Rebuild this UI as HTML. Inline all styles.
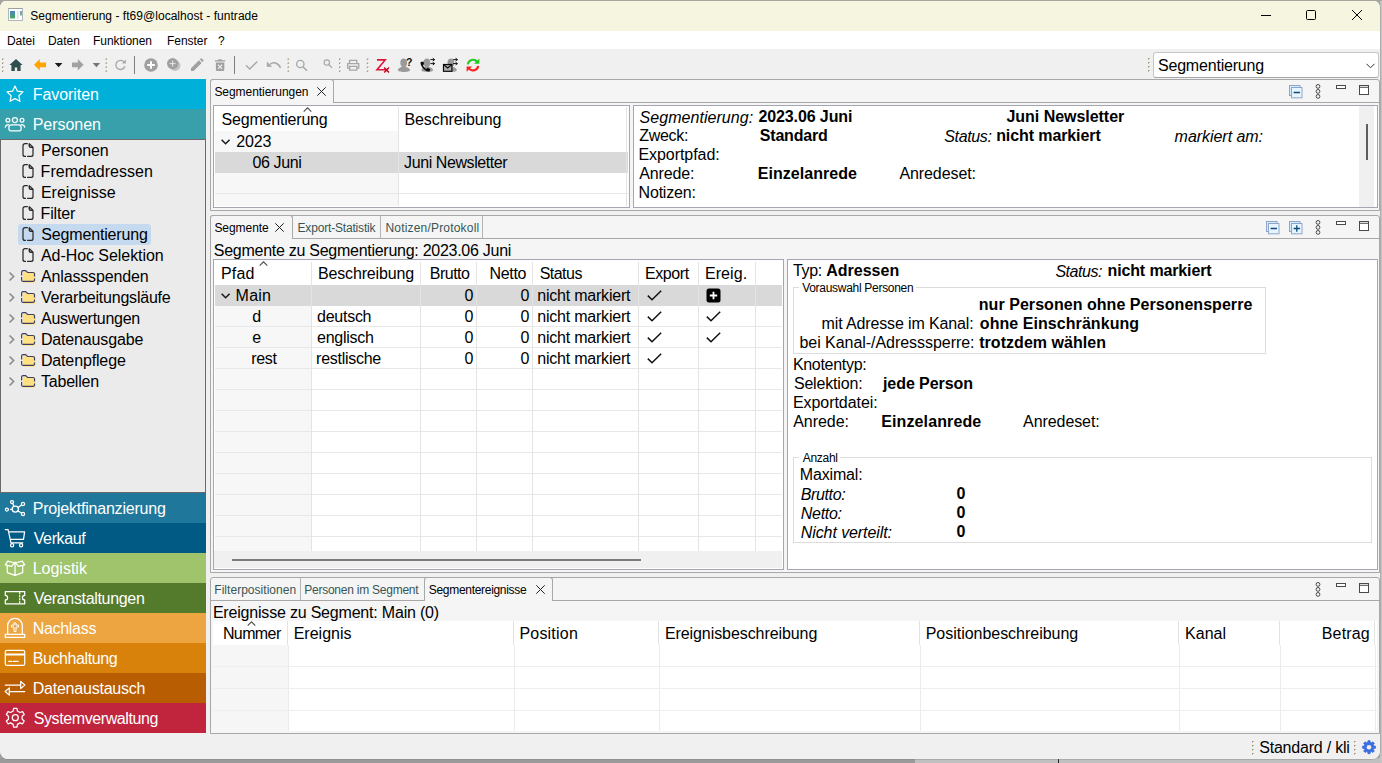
<!DOCTYPE html>
<html lang="de">
<head>
<meta charset="utf-8">
<title>Segmentierung - ft69@localhost - funtrade</title>
<style>
*{box-sizing:border-box;margin:0;padding:0}
html,body{width:1382px;height:763px;overflow:hidden;background:#a4a4a4}
#win{position:absolute;left:0;top:0;width:1380px;height:759px;border-radius:8px;overflow:hidden;background:#f0f0f0;box-shadow:0 0 0 1px rgba(120,120,120,.3)}
body{position:relative;font-family:"Liberation Sans",sans-serif;font-size:16px;color:#000}
.abs{position:absolute}
svg{position:absolute;overflow:visible}
.c{position:absolute;white-space:nowrap;font-size:16px;line-height:19px;height:19px;letter-spacing:-0.27px}
.u{font-size:12px;line-height:16px;height:16px;letter-spacing:-0.08px}
.g{color:#385555}
.w{color:#fff}
.b{font-weight:bold;letter-spacing:-0.1px}
.i{font-style:italic}
.bar{position:absolute;left:0;width:206px;height:30px}
.hl{position:absolute;height:1px;background:#e8e8e8}
.vl{position:absolute;width:1px;background:#e4e4e4}
.pn{position:absolute;background:#fff;border:1px solid #a4a7b2}
.op{position:absolute;background:#f5f5f5;border:1px solid #a8a8a8;border-radius:3px 3px 0 0}
.dots{position:absolute;width:1px;height:15px;background:repeating-linear-gradient(to bottom,#9c8f6c 0,#9c8f6c 1px,transparent 1px,transparent 3px)}
</style>
</head>
<body>

<div class="abs" style="left:0;top:758px;width:1382px;height:5px;background:#9a9a9a"></div><div class="abs" style="left:915px;top:758px;width:467px;height:5px;background:#c0c0c0"></div><div class="abs" style="left:1058px;top:759px;width:1px;height:4px;background:#222"></div><div class="abs" style="left:1380px;top:0;width:2px;height:763px;background:#c4c4c4"></div>
<div id="win">
<div class="abs" style="left:0px;top:0px;width:1382px;height:31px;background:#f5f5e0"></div>
<svg style="left:8px;top:8px" width="15" height="13" viewBox="0 0 15 13"><defs><linearGradient id="ag" x1="0" y1="0" x2="0" y2="1"><stop offset="0" stop-color="#4a84c6"/><stop offset="1" stop-color="#4cac58"/></linearGradient></defs><rect x="0.500" y="0.500" width="14" height="12" fill="#fff" stroke="#b2b6c0"/><path d="M0.500 0.500h14" stroke="#9aa0aa"/><rect x="2" y="3" width="5" height="7.500" fill="url(#ag)"/><rect x="9" y="3" width="1.700" height="8" fill="#e6e6e6"/><rect x="12" y="3" width="2" height="4.500" fill="url(#ag)" opacity="0.800"/></svg>
<div class="c u" style="left:30.20px;top:8px;letter-spacing:0.037px;">Segmentierung - ft69@localhost - funtrade</div>
<svg style="left:1260px;top:9px" width="104" height="12" viewBox="0 0 104 12" fill="none" stroke="#000" stroke-width="1"><path d="M1 6.500h10"/><rect x="46.500" y="1.500" width="9" height="9" rx="1"/><path d="M92 1l10 10M102 1l-10 10"/></svg>
<div class="abs" style="left:0px;top:31px;width:1382px;height:18px;background:#fff"></div>
<div class="c u" style="left:7.00px;top:33px;letter-spacing:-0.050px;">Datei</div>
<div class="c u" style="left:48.00px;top:33px;letter-spacing:-0.050px;">Daten</div>
<div class="c u" style="left:93.00px;top:33px;letter-spacing:-0.050px;">Funktionen</div>
<div class="c u" style="left:167.00px;top:33px;letter-spacing:-0.050px;">Fenster</div>
<div class="c u" style="left:218.00px;top:33px;letter-spacing:-0.050px;">?</div>
<div class="abs" style="left:0px;top:49px;width:1382px;height:30px;background:#f0f0f0"></div>
<svg style="left:0;top:49px" width="500" height="30" viewBox="0 49 500 30">
<g fill="#a39676"><rect x="2" y="58.5" width="1.6" height="1.6"/><rect x="2" y="62.5" width="1.6" height="1.6"/><rect x="2" y="66.5" width="1.6" height="1.6"/><rect x="2" y="70.5" width="1.6" height="1.6"/><rect x="105.6" y="58.5" width="1.6" height="1.6"/><rect x="105.6" y="62.5" width="1.6" height="1.6"/><rect x="105.6" y="66.5" width="1.6" height="1.6"/><rect x="105.6" y="70.5" width="1.6" height="1.6"/></g>
<g fill="#fff"><rect x="3" y="59.5" width="1.2" height="1.2"/><rect x="3" y="63.5" width="1.2" height="1.2"/><rect x="3" y="67.5" width="1.2" height="1.2"/><rect x="3" y="71.5" width="1.2" height="1.2"/><rect x="106.6" y="59.5" width="1.2" height="1.2"/><rect x="106.6" y="63.5" width="1.2" height="1.2"/><rect x="106.6" y="67.5" width="1.2" height="1.2"/><rect x="106.6" y="71.5" width="1.2" height="1.2"/></g>
<path d="M16 59L9.4 65h2v6h3.4v-3.6h2.4V71h3.4v-6h2z" fill="#2f4f4f"/>
<path d="M34 64.8l5.8-5.8v3.4h6.3v4.8h-6.3v3.4z" fill="#ffa500"/>
<path d="M54.8 63h7.6l-3.8 4.2z" fill="#1a1a1a"/>
<path d="M83.6 64.8l-5.8-5.8v3.4h-5.8v4.8h5.8v3.4z" fill="#a2a2a2"/>
<path d="M92.7 63h7.4l-3.7 4.2z" fill="#757575"/>
<path d="M124.3 62.3A4.6 4.6 0 1 0 124.9 66.2" fill="none" stroke="#a6a6a6" stroke-width="1.3"/><path d="M125.8 59.6v3.8h-3.8z" fill="#a6a6a6"/>
<rect x="134" y="56" width="1" height="18" fill="#7e7e7e"/>
<circle cx="151" cy="65" r="6.8" fill="#a0a0a0"/><path d="M151 61.2v7.6M147.2 65h7.6" stroke="#fff" stroke-width="2"/>
<circle cx="175" cy="65.5" r="5.4" fill="#c2c2c2"/><circle cx="172.6" cy="63.6" r="5.6" fill="#a0a0a0"/><path d="M172.6 60.6v6M169.6 63.6h6" stroke="#e8e8e8" stroke-width="1"/>
<path d="M191 70.9v-2.6l8-8 2.6 2.6-8 8zM199.8 59.5l1-1a.7.7 0 0 1 1 0l1.6 1.6a.7.7 0 0 1 0 1l-1 1z" fill="#a0a0a0"/>
<path d="M215 60.2h3l.7-.9h2.8l.7.9h3v1.3H215zM215.9 62.5h8.4v7.2a1.2 1.2 0 0 1-1.2 1.2h-6a1.2 1.2 0 0 1-1.2-1.2z" fill="#a0a0a0"/><path d="M218 64.6l4.2 4.2M222.2 64.6l-4.2 4.2" stroke="#f0f0f0" stroke-width="1.2"/>
<rect x="234" y="56" width="1" height="18" fill="#7e7e7e"/>
<path d="M246 65.3l3.7 3.7 7.6-7.6" fill="none" stroke="#a6a6a6" stroke-width="1.4"/>
<path d="M270.2 64.2c3-2.5 7.6-2 10.4 3.6" fill="none" stroke="#a6a6a6" stroke-width="1.5"/><path d="M266.8 61.4v5.4h5.4z" fill="#a6a6a6"/>
<g fill="#a39676"><rect x="287.6" y="58.5" width="1.6" height="1.6"/><rect x="287.6" y="62.5" width="1.6" height="1.6"/><rect x="287.6" y="66.5" width="1.6" height="1.6"/><rect x="287.6" y="70.5" width="1.6" height="1.6"/><rect x="339" y="58.5" width="1.6" height="1.6"/><rect x="339" y="62.5" width="1.6" height="1.6"/><rect x="339" y="66.5" width="1.6" height="1.6"/><rect x="339" y="70.5" width="1.6" height="1.6"/><rect x="366.8" y="58.5" width="1.6" height="1.6"/><rect x="366.8" y="62.5" width="1.6" height="1.6"/><rect x="366.8" y="66.5" width="1.6" height="1.6"/><rect x="366.8" y="70.5" width="1.6" height="1.6"/></g>
<g fill="#fff"><rect x="288.6" y="59.5" width="1.2" height="1.2"/><rect x="288.6" y="63.5" width="1.2" height="1.2"/><rect x="288.6" y="67.5" width="1.2" height="1.2"/><rect x="288.6" y="71.5" width="1.2" height="1.2"/><rect x="340" y="59.5" width="1.2" height="1.2"/><rect x="340" y="63.5" width="1.2" height="1.2"/><rect x="340" y="67.5" width="1.2" height="1.2"/><rect x="340" y="71.5" width="1.2" height="1.2"/><rect x="367.8" y="59.5" width="1.2" height="1.2"/><rect x="367.8" y="63.5" width="1.2" height="1.2"/><rect x="367.8" y="67.5" width="1.2" height="1.2"/><rect x="367.8" y="71.5" width="1.2" height="1.2"/></g>
<circle cx="300.3" cy="64" r="3.7" fill="none" stroke="#a6a6a6" stroke-width="1.3"/><path d="M303 66.8l4 4" stroke="#a6a6a6" stroke-width="1.5"/>
<circle cx="326.8" cy="62.6" r="2.7" fill="none" stroke="#a6a6a6" stroke-width="1.1"/><path d="M328.8 64.6l3.2 3.2" stroke="#a6a6a6" stroke-width="1.3"/>
<path d="M349.6 63.4v-3h7.2v3M349.6 68.2h-1.9v-4.6h11v4.6h-1.9M349.6 66.4h7.2v3.8h-7.2z" fill="none" stroke="#a6a6a6" stroke-width="1.3"/>
<path d="M377 59.9h8.2l-8.2 9.8h8.6" fill="none" stroke="#dc143c" stroke-width="1.6"/><path d="M384.2 67.4l4.8 5M389 67.4l-4.8 5" stroke="#c4001c" stroke-width="1.4"/>
<path d="M398 70.2c0-2.2 2.4-2.6 3.9-3.4-1.3-1.4-1.6-2.8-1.6-4.6 0-2.2 1.4-3.8 3.4-3.8s3.4 1.600 3.400 3.800c0 1.800-.3 3.200-1.600 4.600 1.500.8 4.500 1.200 4.500 3.400 0 1.200-2.800 1.700-6 1.700s-6-.5-6-1.700z" fill="#9a9a9a"/>
<text x="406" y="66" font-family="Liberation Sans,sans-serif" font-weight="bold" font-size="10.500" fill="#111">?</text>
<path d="M421.4 70.2c0-2.200 2.200-2.600 3.700-3.400-1.300-1.400-1.600-2.800-1.600-4.600 0-2.200 1.400-3.800 3.400-3.800s3.400 1.600 3.400 3.800c0 1.800-.3 3.200-1.600 4.600 1.500.8 4.300 1.200 4.300 3.400 0 1.200-2.700 1.700-5.800 1.700s-5.800-.5-5.800-1.700z" fill="#9a9a9a"/>
<path d="M420.600 62c-.3 1.600.5 4.200 2.600 6.600 2.200 2.400 4.600 3.200 6.400 2.800l.5-2.500-2.500-1.100-1.200 1.200c-1.300-.6-3-2.400-3.500-3.800l1.300-1.100-.9-2.500z" fill="#0a0a0a"/>
<path d="M430.400 59.600h4.200M432.800 58.200l1.800 1.400-1.800 1.400M430.400 63.600h4.200M432.800 62.200l1.800 1.400-1.800 1.400" fill="none" stroke="#111" stroke-width="1"/>
<path d="M445.400 70.200c0-2.200 2.200-2.600 3.700-3.400-1.300-1.400-1.600-2.800-1.600-4.600 0-2.200 1.400-3.800 3.400-3.800s3.400 1.600 3.400 3.800c0 1.800-.3 3.200-1.600 4.600 1.500.8 4.100 1.200 4.100 3.400 0 1.200-2.600 1.700-5.700 1.700s-5.700-.5-5.700-1.700z" fill="#9a9a9a"/>
<rect x="443.500" y="64.500" width="8.400" height="6.800" fill="#b0b0b0" stroke="#0a0a0a" stroke-width="1.200"/><path d="M443.800 64.800l3.900 3.200 3.900-3.200" fill="none" stroke="#0a0a0a" stroke-width="1.100"/>
<path d="M453.200 59.600h4.200M455.600 58.200l1.800 1.400-1.800 1.400M453.200 63.600h4.200M455.600 62.200l1.800 1.400-1.800 1.400" fill="none" stroke="#111" stroke-width="1"/>
<path d="M467.800 64.400a5.300 5.300 0 0 1 9.400-2.600" fill="none" stroke="#26c926" stroke-width="2.200"/><path d="M479.400 58.400v5.400h-5.400z" fill="#26c926"/>
<path d="M478.200 65.800a5.300 5.300 0 0 1-9.400 2.600" fill="none" stroke="#ff1f1f" stroke-width="2.200"/><path d="M466.600 71.800v-5.400h5.400z" fill="#ff1f1f"/>
</svg>
<div class="abs" style="left:1153px;top:52px;width:226px;height:26px;background:#fff;border:1px solid #c6c6c6;border-bottom-color:#a6a6a6;border-radius:3px"></div>
<div class="c" style="left:1158.00px;top:56px;letter-spacing:-0.270px;letter-spacing:-0.2px">Segmentierung</div>
<svg style="left:1366px;top:63px" width="9" height="6" viewBox="0 0 9 6" fill="none" stroke="#333" stroke-width="1"><path d="M0.5 0.8l4 4 4-4"/></svg>
<svg style="left:1148px;top:58.3px" width="3" height="15" viewBox="0 0 3 15"><rect x="0" y="0" width="1.700" height="1.700" fill="#a39a82"/><rect x="1" y="1" width="1.200" height="1.200" fill="#fff"/><rect x="0" y="4" width="1.700" height="1.700" fill="#a39a82"/><rect x="1" y="5" width="1.200" height="1.200" fill="#fff"/><rect x="0" y="8" width="1.700" height="1.700" fill="#a39a82"/><rect x="1" y="9" width="1.200" height="1.200" fill="#fff"/><rect x="0" y="12" width="1.700" height="1.700" fill="#a39a82"/><rect x="1" y="13" width="1.200" height="1.200" fill="#fff"/></svg>
<div class="abs" style="left:0px;top:79px;width:206px;height:30px;background:#00b0d8"></div>
<div class="c w" style="left:32.70px;top:85px;letter-spacing:-0.050px;">Favoriten</div>
<div class="abs" style="left:0px;top:109px;width:206px;height:30px;background:#37a0ab"></div>
<div class="c w" style="left:32.70px;top:115px;letter-spacing:-0.042px;">Personen</div>
<div class="abs" style="left:0px;top:493px;width:206px;height:30px;background:#1f789c"></div>
<div class="c w" style="left:32.70px;top:499px;letter-spacing:-0.215px;">Projektfinanzierung</div>
<div class="abs" style="left:0px;top:523px;width:206px;height:30px;background:#005a84"></div>
<div class="c w" style="left:33.70px;top:529px;letter-spacing:-0.369px;">Verkauf</div>
<div class="abs" style="left:0px;top:553px;width:206px;height:30px;background:#a0c46c"></div>
<div class="c w" style="left:32.70px;top:559px;letter-spacing:-0.007px;">Logistik</div>
<div class="abs" style="left:0px;top:583px;width:206px;height:30px;background:#547a2b"></div>
<div class="c w" style="left:33.70px;top:589px;letter-spacing:-0.325px;">Veranstaltungen</div>
<div class="abs" style="left:0px;top:613px;width:206px;height:30px;background:#eca540"></div>
<div class="c w" style="left:32.70px;top:619px;letter-spacing:-0.301px;">Nachlass</div>
<div class="abs" style="left:0px;top:643px;width:206px;height:30px;background:#d9820b"></div>
<div class="c w" style="left:32.70px;top:649px;letter-spacing:-0.396px;">Buchhaltung</div>
<div class="abs" style="left:0px;top:673px;width:206px;height:30px;background:#b95d02"></div>
<div class="c w" style="left:32.70px;top:679px;letter-spacing:-0.218px;">Datenaustausch</div>
<div class="abs" style="left:0px;top:703px;width:206px;height:30px;background:#c1253e"></div>
<div class="c w" style="left:33.70px;top:709px;letter-spacing:-0.395px;">Systemverwaltung</div>
<svg style="left:0;top:79px" width="40" height="654" viewBox="0 79 40 654" fill="none" stroke="#fff" stroke-width="1.25" stroke-linejoin="round" stroke-linecap="round">
<path d="M15.00 86.10 L17.41 91.18 L22.99 91.90 L18.90 95.77 L19.94 101.30 L15.00 98.60 L10.06 101.30 L11.10 95.77 L7.01 91.90 L12.59 91.18Z"/>
<circle cx="14.9" cy="120" r="2.5"/><circle cx="7.9" cy="120.300" r="1.9"/><circle cx="22" cy="120.300" r="1.9"/>
<path d="M11.400 124.900h7.200a2.500 2.500 0 0 1 2.500 2.500v1.600a1.900 1.900 0 0 1-1.900 1.900h-8.400a1.900 1.900 0 0 1-1.900-1.900v-1.600a2.500 2.500 0 0 1 2.500-2.500zM5.300 127.200c.300-1.500 1.500-2.500 3.300-2.600M24.700 127.200c-.3-1.500-1.500-2.500-3.300-2.600"/>
<circle cx="15.3" cy="509.1" r="3.1"/><circle cx="12" cy="502" r="1.5"/><circle cx="23" cy="504" r="1.600"/><circle cx="23" cy="514" r="1.600"/><circle cx="6.900" cy="509.500" r="1.500"/>
<path d="M13.9 506.200l-1.200-2.700M18.200 507.600l3.300-2.500M18.100 510.900l3.400 2.200M12.100 509.300h-1.600"/>
<path d="M5.300 529.600h2.800l2.900 13.200h11.800M8.600 531.800h16l-1.100 7.600h-13.200"/><circle cx="12.100" cy="545.200" r="1.600"/><circle cx="21.100" cy="545.200" r="1.600"/>
<path d="M7.300 565.800v6.800l7.700 2.800 7.700-2.800v-6.800M5.300 564.800l2.400-3.600 7.300 1.800 7.300-1.800 2.400 3.600-6.200 1.600-3.500-4.200-3.500 4.200zM15 563.200v12"/>
<path d="M5.300 591.600h19.400v3.800a2.300 2.300 0 0 0 0 4.600v3.800h-19.400v-3.800a2.300 2.300 0 0 0 0-4.600z"/><path d="M19.700 592.600v10.600" stroke-dasharray="1.200 1.800"/>
<path d="M7.700 634.200v-8.600a7.300 7.300 0 0 1 14.600 0v8.600M5.300 634.300h19.400v3.100h-19.400z"/><path d="M14 622.900h2v2.200h2.500v2h-2.500v4.500h-2v-4.500h-2.500v-2h2.500z" stroke-width="1"/>
<rect x="5.300" y="650.400" width="19.400" height="15" rx="1.600"/><path d="M5.300 654.500h19.400" stroke-width="2.200" stroke-linecap="butt"/><path d="M8.700 661.400h3M13.300 661.400h4.800"/>
<path d="M5.300 685h15.300M20.700 681.400l4.100 3.600-4.100 3.600zM24.800 691.500h-15.300M9.300 687.900l-4.100 3.600 4.100 3.600z"/>
<path d="M13.14 711.04 L13.65 708.34 L16.95 708.34 L17.46 711.04 L19.98 712.50 L22.58 711.59 L24.23 714.45 L22.15 716.24 L22.15 719.16 L24.23 720.95 L22.58 723.81 L19.98 722.90 L17.46 724.36 L16.95 727.06 L13.65 727.06 L13.14 724.36 L10.62 722.90 L8.02 723.81 L6.37 720.95 L8.45 719.16 L8.45 716.24 L6.37 714.45 L8.02 711.59 L10.62 712.50Z"/><circle cx="15.3" cy="717.700" r="3"/>
</svg>
<div class="abs" style="left:0px;top:139px;width:206px;height:354px;background:#ebebeb;border:1px solid #6a6a6a"></div>
<div class="abs" style="left:18px;top:224px;width:133px;height:21px;background:#c5daef;border-radius:3px"></div>
<div class="c" style="left:40.90px;top:141px;letter-spacing:-0.099px;">Personen</div>
<svg style="left:22px;top:143px" width="12" height="15" viewBox="0 0 12 15" fill="none" stroke="#2a2a2a" stroke-width="1.25"><path d="M5.800 0.600H3A2 2 0 0 0 1 2.600V11.400A2 2 0 0 0 3 13.400H4M5.100 13.400H9A2 2 0 0 0 11 11.400V4.300L7.300 0.600"/><path d="M7.300 0.600V2.900A1.400 1.400 0 0 0 8.700 4.300H11" stroke-width="1.500"/></svg>
<div class="c" style="left:40.60px;top:162px;letter-spacing:0.013px;">Fremdadressen</div>
<svg style="left:22px;top:164px" width="12" height="15" viewBox="0 0 12 15" fill="none" stroke="#2a2a2a" stroke-width="1.25"><path d="M5.800 0.600H3A2 2 0 0 0 1 2.600V11.400A2 2 0 0 0 3 13.400H4M5.100 13.400H9A2 2 0 0 0 11 11.400V4.300L7.300 0.600"/><path d="M7.300 0.600V2.900A1.400 1.400 0 0 0 8.700 4.300H11" stroke-width="1.500"/></svg>
<div class="c" style="left:40.90px;top:183px;letter-spacing:0.011px;">Ereignisse</div>
<svg style="left:22px;top:185px" width="12" height="15" viewBox="0 0 12 15" fill="none" stroke="#2a2a2a" stroke-width="1.25"><path d="M5.800 0.600H3A2 2 0 0 0 1 2.600V11.400A2 2 0 0 0 3 13.400H4M5.100 13.400H9A2 2 0 0 0 11 11.400V4.300L7.300 0.600"/><path d="M7.300 0.600V2.900A1.400 1.400 0 0 0 8.700 4.300H11" stroke-width="1.500"/></svg>
<div class="c" style="left:40.60px;top:204px;letter-spacing:-0.165px;">Filter</div>
<svg style="left:22px;top:206px" width="12" height="15" viewBox="0 0 12 15" fill="none" stroke="#2a2a2a" stroke-width="1.25"><path d="M5.800 0.600H3A2 2 0 0 0 1 2.600V11.400A2 2 0 0 0 3 13.400H4M5.100 13.400H9A2 2 0 0 0 11 11.400V4.300L7.300 0.600"/><path d="M7.300 0.600V2.900A1.400 1.400 0 0 0 8.700 4.300H11" stroke-width="1.500"/></svg>
<div class="c" style="left:41.30px;top:225px;letter-spacing:-0.168px;">Segmentierung</div>
<svg style="left:22px;top:227px" width="12" height="15" viewBox="0 0 12 15" fill="none" stroke="#2a2a2a" stroke-width="1.25"><path d="M5.800 0.600H3A2 2 0 0 0 1 2.600V11.400A2 2 0 0 0 3 13.400H4M5.100 13.400H9A2 2 0 0 0 11 11.400V4.300L7.300 0.600"/><path d="M7.300 0.600V2.900A1.400 1.400 0 0 0 8.700 4.300H11" stroke-width="1.500"/></svg>
<div class="c" style="left:41.00px;top:246px;letter-spacing:-0.061px;">Ad-Hoc Selektion</div>
<svg style="left:22px;top:248px" width="12" height="15" viewBox="0 0 12 15" fill="none" stroke="#2a2a2a" stroke-width="1.25"><path d="M5.800 0.600H3A2 2 0 0 0 1 2.600V11.400A2 2 0 0 0 3 13.400H4M5.100 13.400H9A2 2 0 0 0 11 11.400V4.300L7.300 0.600"/><path d="M7.300 0.600V2.900A1.400 1.400 0 0 0 8.700 4.300H11" stroke-width="1.500"/></svg>
<div class="c" style="left:41.00px;top:267px;letter-spacing:-0.151px;">Anlassspenden</div>
<svg style="left:8px;top:269px" width="30" height="15" viewBox="0 0 30 15"><path d="M1.600 3.500l4 4-4 4" fill="none" stroke="#8a8a8a" stroke-width="1.600"/><path d="M14.800 4.200A1 1 0 0 1 15.800 3.200H26.500A1 1 0 0 1 27.500 4.200V12.700A1 1 0 0 1 26.500 13.700H15.800A1 1 0 0 1 14.800 12.700Z" fill="#ffe082"/><path d="M14.800 2.400H18L19.600 3.600H14.800Z" fill="#ffe082"/><path d="M13.600 6.500V3.100A1.500 1.500 0 0 1 15.100 1.600H17.600L19.600 3.500H25A1.500 1.500 0 0 1 26.500 5V7.600M26.500 9.600V10.900A1.500 1.500 0 0 1 25 12.400H15.100A1.500 1.500 0 0 1 13.600 10.900V8" fill="none" stroke="#3c3f63" stroke-width="1.150"/></svg>
<div class="c" style="left:41.00px;top:288px;letter-spacing:-0.219px;">Verarbeitungsläufe</div>
<svg style="left:8px;top:290px" width="30" height="15" viewBox="0 0 30 15"><path d="M1.600 3.500l4 4-4 4" fill="none" stroke="#8a8a8a" stroke-width="1.600"/><path d="M14.800 4.200A1 1 0 0 1 15.800 3.200H26.500A1 1 0 0 1 27.500 4.200V12.700A1 1 0 0 1 26.500 13.700H15.800A1 1 0 0 1 14.800 12.700Z" fill="#ffe082"/><path d="M14.800 2.400H18L19.600 3.600H14.800Z" fill="#ffe082"/><path d="M13.600 6.500V3.100A1.500 1.500 0 0 1 15.100 1.600H17.600L19.600 3.500H25A1.500 1.500 0 0 1 26.500 5V7.600M26.500 9.600V10.900A1.500 1.500 0 0 1 25 12.400H15.100A1.500 1.500 0 0 1 13.600 10.900V8" fill="none" stroke="#3c3f63" stroke-width="1.150"/></svg>
<div class="c" style="left:41.00px;top:309px;letter-spacing:-0.281px;">Auswertungen</div>
<svg style="left:8px;top:311px" width="30" height="15" viewBox="0 0 30 15"><path d="M1.600 3.500l4 4-4 4" fill="none" stroke="#8a8a8a" stroke-width="1.600"/><path d="M14.800 4.200A1 1 0 0 1 15.800 3.200H26.500A1 1 0 0 1 27.500 4.200V12.700A1 1 0 0 1 26.500 13.700H15.800A1 1 0 0 1 14.800 12.700Z" fill="#ffe082"/><path d="M14.800 2.400H18L19.600 3.600H14.800Z" fill="#ffe082"/><path d="M13.600 6.500V3.100A1.500 1.500 0 0 1 15.100 1.600H17.600L19.600 3.500H25A1.500 1.500 0 0 1 26.500 5V7.600M26.500 9.600V10.900A1.500 1.500 0 0 1 25 12.400H15.100A1.500 1.500 0 0 1 13.600 10.900V8" fill="none" stroke="#3c3f63" stroke-width="1.150"/></svg>
<div class="c" style="left:40.90px;top:330px;letter-spacing:-0.144px;">Datenausgabe</div>
<svg style="left:8px;top:332px" width="30" height="15" viewBox="0 0 30 15"><path d="M1.600 3.500l4 4-4 4" fill="none" stroke="#8a8a8a" stroke-width="1.600"/><path d="M14.800 4.200A1 1 0 0 1 15.800 3.200H26.500A1 1 0 0 1 27.500 4.200V12.700A1 1 0 0 1 26.500 13.700H15.800A1 1 0 0 1 14.800 12.700Z" fill="#ffe082"/><path d="M14.800 2.400H18L19.600 3.600H14.800Z" fill="#ffe082"/><path d="M13.600 6.500V3.100A1.500 1.500 0 0 1 15.100 1.600H17.600L19.600 3.500H25A1.500 1.500 0 0 1 26.500 5V7.600M26.500 9.600V10.900A1.500 1.500 0 0 1 25 12.400H15.100A1.500 1.500 0 0 1 13.600 10.900V8" fill="none" stroke="#3c3f63" stroke-width="1.150"/></svg>
<div class="c" style="left:40.90px;top:351px;letter-spacing:-0.139px;">Datenpflege</div>
<svg style="left:8px;top:353px" width="30" height="15" viewBox="0 0 30 15"><path d="M1.600 3.500l4 4-4 4" fill="none" stroke="#8a8a8a" stroke-width="1.600"/><path d="M14.800 4.200A1 1 0 0 1 15.800 3.200H26.500A1 1 0 0 1 27.500 4.200V12.700A1 1 0 0 1 26.500 13.700H15.800A1 1 0 0 1 14.800 12.700Z" fill="#ffe082"/><path d="M14.800 2.400H18L19.600 3.600H14.800Z" fill="#ffe082"/><path d="M13.600 6.500V3.100A1.500 1.500 0 0 1 15.100 1.600H17.600L19.600 3.500H25A1.500 1.500 0 0 1 26.500 5V7.600M26.500 9.600V10.900A1.500 1.500 0 0 1 25 12.400H15.100A1.500 1.500 0 0 1 13.600 10.900V8" fill="none" stroke="#3c3f63" stroke-width="1.150"/></svg>
<div class="c" style="left:41.00px;top:372px;letter-spacing:-0.215px;">Tabellen</div>
<svg style="left:8px;top:374px" width="30" height="15" viewBox="0 0 30 15"><path d="M1.600 3.500l4 4-4 4" fill="none" stroke="#8a8a8a" stroke-width="1.600"/><path d="M14.800 4.200A1 1 0 0 1 15.800 3.200H26.500A1 1 0 0 1 27.500 4.200V12.700A1 1 0 0 1 26.500 13.700H15.800A1 1 0 0 1 14.800 12.700Z" fill="#ffe082"/><path d="M14.800 2.400H18L19.600 3.600H14.800Z" fill="#ffe082"/><path d="M13.600 6.500V3.100A1.500 1.500 0 0 1 15.100 1.600H17.600L19.600 3.500H25A1.500 1.500 0 0 1 26.500 5V7.600M26.500 9.600V10.900A1.500 1.500 0 0 1 25 12.400H15.100A1.500 1.500 0 0 1 13.600 10.900V8" fill="none" stroke="#3c3f63" stroke-width="1.150"/></svg>
<div class="op" style="left:210px;top:79px;width:1170px;height:132px"></div>
<div class="abs" style="left:211px;top:102px;width:1168px;height:1px;background:#a8a8a8"></div>
<div class="abs" style="left:210px;top:79px;width:124px;height:24px;background:#f5f5f5;border:1px solid #a8a8a8;border-bottom:none;border-radius:3px 3px 0 0"></div>
<div class="c u" style="left:214.40px;top:84px;letter-spacing:-0.047px;">Segmentierungen</div>
<svg style="left:317px;top:87px" width="9" height="9" viewBox="0 0 9 9" fill="none" stroke="#222" stroke-width="1"><path d="M0.300 0.300l8.400 8.400M8.700 0.300l-8.400 8.400"/></svg>
<svg style="left:1315.400px;top:83.9px" width="6" height="15" viewBox="0 0 6 15" fill="none" stroke="#4a4a4a" stroke-width="1"><circle cx="3" cy="2.400" r="1.900"/><circle cx="3" cy="7.400" r="1.900"/><circle cx="3" cy="12.400" r="1.900"/></svg>
<svg style="left:1336px;top:85px" width="10" height="4" viewBox="0 0 10 4" fill="#fff" stroke="#4a4a4a" stroke-width="1"><rect x="0.500" y="0.500" width="9" height="3"/></svg>
<svg style="left:1359px;top:85px" width="10" height="10" viewBox="0 0 10 10" fill="#fff" stroke="#4a4a4a" stroke-width="1"><rect x="0.500" y="0.500" width="9" height="9"/><path d="M0.500 2.300h9"/></svg>
<svg style="left:1289px;top:85px" width="14" height="14" viewBox="0 0 14 14" fill="#d6ecfb" stroke="#8ea4c8" stroke-width="1"><rect x="0.500" y="0.500" width="10.500" height="10"/><rect x="2.500" y="2.500" width="10.500" height="10.300" fill="#e6f5ff"/><path d="M4.600 7.500h6.400" stroke="#0d4a80" stroke-width="1.300"/></svg>
<div class="pn" style="left:213px;top:105px;width:417px;height:103px"></div>
<div class="abs" style="left:215px;top:131px;width:183px;height:75px;background:#f7f7f7"></div>
<div class="abs" style="left:215px;top:152px;width:413px;height:21px;background:#d9d9d9"></div>
<div class="hl" style="left:215px;top:193px;width:414px"></div>
<div class="vl" style="left:398px;top:107px;height:99px"></div>
<div class="vl" style="left:626px;top:107px;height:99px"></div>
<div class="c" style="left:221.50px;top:110px;letter-spacing:-0.193px;">Segmentierung</div>
<svg style="left:303px;top:107px" width="9" height="5" viewBox="0 0 9 5" fill="none" stroke="#4c4c4c" stroke-width="1.100"><path d="M0.700 4.700l3.800-3.800 3.800 3.800"/></svg>
<div class="c" style="left:404.40px;top:110px;letter-spacing:-0.077px;">Beschreibung</div>
<svg style="left:221px;top:139px" width="9" height="6" viewBox="0 0 9 6" fill="none" stroke="#1c1c1c" stroke-width="1.600"><path d="M0.600 0.800l4 3.900 4-3.900"/></svg>
<div class="c" style="left:236.20px;top:132px;letter-spacing:-0.132px;">2023</div>
<div class="c" style="left:252.40px;top:153px;letter-spacing:-0.357px;">06 Juni</div>
<div class="c" style="left:404.10px;top:153px;letter-spacing:-0.418px;">Juni Newsletter</div>
<div class="pn" style="left:633px;top:105px;width:745px;height:103px"></div>
<div class="abs" style="left:1359px;top:106px;width:15px;height:101px;background:#f0f0f0"></div>
<div class="abs" style="left:1366px;top:124px;width:2px;height:36px;background:#5e5e5e"></div>
<div class="c i" style="left:639.60px;top:108px;letter-spacing:0.045px;">Segmentierung:</div>
<div class="c b" style="left:758.40px;top:107px;letter-spacing:-0.102px;">2023.06 Juni</div>
<div class="c b" style="left:1006.50px;top:107px;letter-spacing:-0.038px;">Juni Newsletter</div>
<div class="c" style="left:639.20px;top:126px;letter-spacing:-0.305px;">Zweck:</div>
<div class="c b" style="left:759.80px;top:126px;letter-spacing:-0.196px;">Standard</div>
<div class="c i" style="left:944.30px;top:127px;letter-spacing:-0.377px;">Status:</div>
<div class="c b" style="left:996.20px;top:126px;letter-spacing:-0.099px;">nicht markiert</div>
<div class="c i" style="left:1174.60px;top:127px;letter-spacing:-0.041px;">markiert am:</div>
<div class="c" style="left:638.40px;top:145px;letter-spacing:-0.048px;">Exportpfad:</div>
<div class="c" style="left:639.20px;top:164px;letter-spacing:-0.149px;">Anrede:</div>
<div class="c b" style="left:757.80px;top:164px;letter-spacing:0.036px;">Einzelanrede</div>
<div class="c" style="left:899.40px;top:164px;letter-spacing:-0.082px;">Anredeset:</div>
<div class="c" style="left:638.60px;top:183px;letter-spacing:-0.207px;">Notizen:</div>
<div class="op" style="left:210px;top:215px;width:1170px;height:358px"></div>
<div class="abs" style="left:211px;top:238px;width:1168px;height:1px;background:#a8a8a8"></div>
<div class="abs" style="left:210px;top:215px;width:83px;height:24px;background:#f5f5f5;border:1px solid #a8a8a8;border-bottom:none;border-radius:3px 3px 0 0"></div>
<div class="c u" style="left:214.40px;top:220px;letter-spacing:-0.050px;">Segmente</div>
<svg style="left:275px;top:223px" width="9" height="9" viewBox="0 0 9 9" fill="none" stroke="#222" stroke-width="1"><path d="M0.300 0.300l8.400 8.400M8.700 0.300l-8.400 8.400"/></svg>
<div class="c u g" style="left:297.50px;top:220px;letter-spacing:-0.173px;">Export-Statistik</div>
<div class="abs" style="left:380px;top:216px;width:1px;height:22px;background:#b4b4b4"></div>
<div class="c u g" style="left:385.50px;top:220px;letter-spacing:0.185px;">Notizen/Protokoll</div>
<div class="abs" style="left:482px;top:216px;width:1px;height:22px;background:#b4b4b4"></div>
<svg style="left:1315.400px;top:219.9px" width="6" height="15" viewBox="0 0 6 15" fill="none" stroke="#4a4a4a" stroke-width="1"><circle cx="3" cy="2.400" r="1.900"/><circle cx="3" cy="7.400" r="1.900"/><circle cx="3" cy="12.400" r="1.900"/></svg>
<svg style="left:1336px;top:221px" width="10" height="4" viewBox="0 0 10 4" fill="#fff" stroke="#4a4a4a" stroke-width="1"><rect x="0.500" y="0.500" width="9" height="3"/></svg>
<svg style="left:1359px;top:221px" width="10" height="10" viewBox="0 0 10 10" fill="#fff" stroke="#4a4a4a" stroke-width="1"><rect x="0.500" y="0.500" width="9" height="9"/><path d="M0.500 2.300h9"/></svg>
<svg style="left:1266px;top:221px" width="14" height="14" viewBox="0 0 14 14" fill="#d6ecfb" stroke="#8ea4c8" stroke-width="1"><rect x="0.500" y="0.500" width="10.500" height="10"/><rect x="2.500" y="2.500" width="10.500" height="10.300" fill="#e6f5ff"/><path d="M4.600 7.500h6.400" stroke="#0d4a80" stroke-width="1.300"/></svg>
<svg style="left:1289px;top:221px" width="14" height="14" viewBox="0 0 14 14" fill="#d6ecfb" stroke="#8ea4c8" stroke-width="1"><rect x="0.500" y="0.500" width="10.500" height="10"/><rect x="2.500" y="2.500" width="10.500" height="10.300" fill="#e6f5ff"/><path d="M4.600 7.500h6.400M7.800 4.300v6.400" stroke="#0d4a80" stroke-width="1.300"/></svg>
<div class="c" style="left:213.80px;top:241px;letter-spacing:-0.269px;">Segmente zu Segmentierung: 2023.06 Juni</div>
<div class="pn" style="left:213px;top:259px;width:571px;height:311px"></div>
<div class="abs" style="left:215px;top:285px;width:96px;height:266px;background:#f7f7f7"></div>
<div class="abs" style="left:215px;top:285px;width:567px;height:21px;background:#d9d9d9"></div>
<div class="hl" style="left:215px;top:326px;width:567px"></div>
<div class="hl" style="left:215px;top:347px;width:567px"></div>
<div class="hl" style="left:215px;top:368px;width:567px"></div>
<div class="hl" style="left:215px;top:389px;width:567px"></div>
<div class="hl" style="left:215px;top:410px;width:567px"></div>
<div class="hl" style="left:215px;top:431px;width:567px"></div>
<div class="hl" style="left:215px;top:452px;width:567px"></div>
<div class="hl" style="left:215px;top:473px;width:567px"></div>
<div class="hl" style="left:215px;top:494px;width:567px"></div>
<div class="hl" style="left:215px;top:515px;width:567px"></div>
<div class="hl" style="left:215px;top:536px;width:567px"></div>
<div class="vl" style="left:311px;top:262px;height:289px"></div>
<div class="vl" style="left:420px;top:262px;height:289px"></div>
<div class="vl" style="left:476px;top:262px;height:289px"></div>
<div class="vl" style="left:532px;top:262px;height:289px"></div>
<div class="vl" style="left:638px;top:262px;height:289px"></div>
<div class="vl" style="left:698px;top:262px;height:289px"></div>
<div class="vl" style="left:755px;top:262px;height:289px"></div>
<div class="abs" style="left:214px;top:551px;width:568px;height:17px;background:#f0f0f0"></div>
<div class="abs" style="left:232px;top:558.6px;width:409px;height:2.4px;background:#7c7c7c"></div>
<div class="c" style="left:220.90px;top:264px;letter-spacing:0.228px;">Pfad</div>
<svg style="left:259px;top:261px" width="9" height="5" viewBox="0 0 9 5" fill="none" stroke="#4c4c4c" stroke-width="1.100"><path d="M0.700 4.700l3.800-3.800 3.800 3.800"/></svg>
<div class="c" style="left:317.90px;top:264px;letter-spacing:-0.140px;">Beschreibung</div>
<div class="c" style="left:429.80px;top:264px;letter-spacing:-0.518px;">Brutto</div>
<div class="c" style="left:489.60px;top:264px;letter-spacing:-0.361px;">Netto</div>
<div class="c" style="left:539.70px;top:264px;letter-spacing:-0.532px;">Status</div>
<div class="c" style="left:645.00px;top:264px;letter-spacing:-0.399px;">Export</div>
<div class="c" style="left:704.90px;top:264px;letter-spacing:0.110px;">Ereig.</div>
<svg style="left:221px;top:293px" width="9" height="6" viewBox="0 0 9 6" fill="none" stroke="#1c1c1c" stroke-width="1.600"><path d="M0.600 0.800l4 3.900 4-3.900"/></svg>
<div class="c" style="left:235.60px;top:286px;letter-spacing:0.206px;">Main</div>
<div class="c" style="left:464.40px;top:286px;letter-spacing:-0.270px;">0</div>
<div class="c" style="left:520.60px;top:286px;letter-spacing:-0.270px;">0</div>
<div class="c" style="left:537.30px;top:286px;letter-spacing:-0.221px;">nicht markiert</div>
<svg style="left:647px;top:290px" width="15" height="11" viewBox="0 0 15 11" fill="none" stroke="#111" stroke-width="1.500"><path d="M0.800 5.600l4.200 4.200L14.200 0.800"/></svg>
<svg style="left:706px;top:288px" width="15" height="15" viewBox="0 0 15 15"><rect x="0.500" y="0.500" width="14" height="14" rx="2.500" fill="#000"/><path d="M7.500 3.800v7.400M3.800 7.500h7.400" stroke="#fff" stroke-width="1.800"/></svg>
<div class="c" style="left:252.20px;top:307px;letter-spacing:-0.270px;">d</div>
<div class="c" style="left:317.10px;top:307px;letter-spacing:-0.270px;">deutsch</div>
<div class="c" style="left:464.40px;top:307px;letter-spacing:-0.270px;">0</div>
<div class="c" style="left:520.60px;top:307px;letter-spacing:-0.270px;">0</div>
<div class="c" style="left:537.30px;top:307px;letter-spacing:-0.221px;">nicht markiert</div>
<svg style="left:647px;top:311px" width="15" height="11" viewBox="0 0 15 11" fill="none" stroke="#111" stroke-width="1.500"><path d="M0.800 5.600l4.200 4.200L14.200 0.800"/></svg>
<svg style="left:706px;top:311px" width="15" height="11" viewBox="0 0 15 11" fill="none" stroke="#111" stroke-width="1.500"><path d="M0.800 5.600l4.200 4.200L14.200 0.800"/></svg>
<div class="c" style="left:252.20px;top:328px;letter-spacing:-0.270px;">e</div>
<div class="c" style="left:317.10px;top:328px;letter-spacing:-0.270px;">englisch</div>
<div class="c" style="left:464.40px;top:328px;letter-spacing:-0.270px;">0</div>
<div class="c" style="left:520.60px;top:328px;letter-spacing:-0.270px;">0</div>
<div class="c" style="left:537.30px;top:328px;letter-spacing:-0.221px;">nicht markiert</div>
<svg style="left:647px;top:332px" width="15" height="11" viewBox="0 0 15 11" fill="none" stroke="#111" stroke-width="1.500"><path d="M0.800 5.600l4.200 4.200L14.200 0.800"/></svg>
<svg style="left:706px;top:332px" width="15" height="11" viewBox="0 0 15 11" fill="none" stroke="#111" stroke-width="1.500"><path d="M0.800 5.600l4.200 4.200L14.200 0.800"/></svg>
<div class="c" style="left:251.20px;top:349px;letter-spacing:-0.270px;">rest</div>
<div class="c" style="left:316.10px;top:349px;letter-spacing:-0.270px;">restlische</div>
<div class="c" style="left:464.40px;top:349px;letter-spacing:-0.270px;">0</div>
<div class="c" style="left:520.60px;top:349px;letter-spacing:-0.270px;">0</div>
<div class="c" style="left:537.30px;top:349px;letter-spacing:-0.221px;">nicht markiert</div>
<svg style="left:647px;top:353px" width="15" height="11" viewBox="0 0 15 11" fill="none" stroke="#111" stroke-width="1.500"><path d="M0.800 5.600l4.200 4.200L14.200 0.800"/></svg>
<div class="pn" style="left:787px;top:259px;width:591px;height:311px"></div>
<div class="c" style="left:793.10px;top:261px;letter-spacing:-0.396px;">Typ:</div>
<div class="c b" style="left:826.20px;top:261px;letter-spacing:0.007px;">Adressen</div>
<div class="c i" style="left:1055.40px;top:262px;letter-spacing:-0.460px;">Status:</div>
<div class="c b" style="left:1107.50px;top:261px;letter-spacing:-0.130px;">nicht markiert</div>
<div class="abs" style="left:793px;top:287px;width:473px;height:67px;border:1px solid #dcdcdc"></div>
<div class="abs" style="left:799px;top:287px;width:117px;height:1px;background:#fff"></div>
<div class="c u" style="left:802.20px;top:280px;letter-spacing:-0.293px;">Vorauswahl Personen</div>
<div class="c b" style="left:978.80px;top:295px;letter-spacing:0.046px;">nur Personen ohne Personensperre</div>
<div class="c" style="left:821.50px;top:314px;letter-spacing:-0.128px;">mit Adresse im Kanal:</div>
<div class="c b" style="left:979.80px;top:314px;letter-spacing:0.061px;">ohne Einschränkung</div>
<div class="c" style="left:799.50px;top:333px;letter-spacing:-0.045px;">bei Kanal-/Adresssperre:</div>
<div class="c b" style="left:979.20px;top:333px;letter-spacing:0.046px;">trotzdem wählen</div>
<div class="c" style="left:792.90px;top:355px;letter-spacing:-0.295px;">Knotentyp:</div>
<div class="c" style="left:793.90px;top:374px;letter-spacing:-0.169px;">Selektion:</div>
<div class="c b" style="left:883.00px;top:374px;letter-spacing:-0.073px;">jede Person</div>
<div class="c" style="left:792.90px;top:393px;letter-spacing:-0.049px;">Exportdatei:</div>
<div class="c" style="left:793.20px;top:412px;letter-spacing:-0.032px;">Anrede:</div>
<div class="c b" style="left:881.20px;top:412px;letter-spacing:0.118px;">Einzelanrede</div>
<div class="c" style="left:1023.10px;top:412px;letter-spacing:-0.082px;">Anredeset:</div>
<div class="abs" style="left:793px;top:457px;width:579px;height:86px;border:1px solid #dcdcdc"></div>
<div class="abs" style="left:799px;top:457px;width:41px;height:1px;background:#fff"></div>
<div class="c u" style="left:802.70px;top:450px;letter-spacing:-0.285px;">Anzahl</div>
<div class="c" style="left:799.80px;top:465px;letter-spacing:-0.166px;">Maximal:</div>
<div class="c i" style="left:800.80px;top:485px;letter-spacing:-0.381px;">Brutto:</div>
<div class="c b" style="left:956.60px;top:484px;letter-spacing:-0.100px;">0</div>
<div class="c i" style="left:800.80px;top:504px;letter-spacing:-0.288px;">Netto:</div>
<div class="c b" style="left:956.60px;top:503px;letter-spacing:-0.100px;">0</div>
<div class="c i" style="left:800.80px;top:523px;letter-spacing:-0.095px;">Nicht verteilt:</div>
<div class="c b" style="left:956.60px;top:522px;letter-spacing:-0.100px;">0</div>
<div class="op" style="left:210px;top:577px;width:1170px;height:157px"></div>
<div class="abs" style="left:211px;top:600px;width:1168px;height:1px;background:#a8a8a8"></div>
<div class="c u g" style="left:214.30px;top:582px;letter-spacing:0.033px;">Filterpositionen</div>
<div class="abs" style="left:300px;top:578px;width:1px;height:22px;background:#b4b4b4"></div>
<div class="c u g" style="left:304.20px;top:582px;letter-spacing:-0.239px;">Personen im Segment</div>
<div class="abs" style="left:424px;top:577px;width:129px;height:24px;background:#f5f5f5;border:1px solid #a8a8a8;border-bottom:none;border-radius:3px 3px 0 0"></div>
<div class="c u" style="left:428.80px;top:582px;letter-spacing:-0.303px;">Segmentereignisse</div>
<svg style="left:536px;top:585px" width="9" height="9" viewBox="0 0 9 9" fill="none" stroke="#222" stroke-width="1"><path d="M0.300 0.300l8.400 8.400M8.700 0.300l-8.400 8.400"/></svg>
<svg style="left:1315.400px;top:581.9px" width="6" height="15" viewBox="0 0 6 15" fill="none" stroke="#4a4a4a" stroke-width="1"><circle cx="3" cy="2.400" r="1.900"/><circle cx="3" cy="7.400" r="1.900"/><circle cx="3" cy="12.400" r="1.900"/></svg>
<svg style="left:1336px;top:583px" width="10" height="4" viewBox="0 0 10 4" fill="#fff" stroke="#4a4a4a" stroke-width="1"><rect x="0.500" y="0.500" width="9" height="3"/></svg>
<svg style="left:1359px;top:583px" width="10" height="10" viewBox="0 0 10 10" fill="#fff" stroke="#4a4a4a" stroke-width="1"><rect x="0.500" y="0.500" width="9" height="9"/><path d="M0.500 2.300h9"/></svg>
<div class="c" style="left:212.90px;top:603px;letter-spacing:-0.196px;">Ereignisse zu Segment: Main (0)</div>
<div class="abs" style="left:213px;top:621px;width:1164px;height:110px;background:#fff"></div>
<div class="abs" style="left:213px;top:645px;width:75px;height:86px;background:#f6f6f6"></div>
<div class="hl" style="left:213px;top:666px;width:1164px;background:#eeeeee"></div>
<div class="hl" style="left:213px;top:688px;width:1164px;background:#eeeeee"></div>
<div class="hl" style="left:213px;top:710px;width:1164px;background:#eeeeee"></div>
<div class="vl" style="left:287px;top:621px;height:24px;background:#e3e3e3"></div>
<div class="vl" style="left:288px;top:645px;height:86px;background:#ececec"></div>
<div class="vl" style="left:513px;top:621px;height:24px;background:#e3e3e3"></div>
<div class="vl" style="left:514px;top:645px;height:86px;background:#ececec"></div>
<div class="vl" style="left:658px;top:621px;height:24px;background:#e3e3e3"></div>
<div class="vl" style="left:659px;top:645px;height:86px;background:#ececec"></div>
<div class="vl" style="left:919px;top:621px;height:24px;background:#e3e3e3"></div>
<div class="vl" style="left:920px;top:645px;height:86px;background:#ececec"></div>
<div class="vl" style="left:1178px;top:621px;height:24px;background:#e3e3e3"></div>
<div class="vl" style="left:1179px;top:645px;height:86px;background:#ececec"></div>
<div class="vl" style="left:1279px;top:621px;height:24px;background:#e3e3e3"></div>
<div class="vl" style="left:1280px;top:645px;height:86px;background:#ececec"></div>
<div class="vl" style="left:1374px;top:621px;height:24px;background:#e3e3e3"></div>
<div class="vl" style="left:1375px;top:645px;height:86px;background:#ececec"></div>
<div class="c" style="left:222.90px;top:624px;letter-spacing:-0.600px;">Nummer</div>
<svg style="left:247px;top:621px" width="9" height="5" viewBox="0 0 9 5" fill="none" stroke="#4c4c4c" stroke-width="1.100"><path d="M0.700 4.700l3.800-3.800 3.800 3.800"/></svg>
<div class="c" style="left:293.70px;top:624px;letter-spacing:-0.001px;">Ereignis</div>
<div class="c" style="left:519.40px;top:624px;letter-spacing:0.211px;">Position</div>
<div class="c" style="left:664.90px;top:624px;letter-spacing:-0.078px;">Ereignisbeschreibung</div>
<div class="c" style="left:925.70px;top:624px;letter-spacing:-0.026px;">Positionbeschreibung</div>
<div class="c" style="left:1185.00px;top:624px;letter-spacing:0.033px;">Kanal</div>
<div class="c" style="left:1321.80px;top:624px;letter-spacing:0.152px;">Betrag</div>
<div class="abs" style="left:0px;top:734px;width:1382px;height:26px;background:#f0f0f0"></div>
<svg style="left:1252px;top:741px" width="3" height="15" viewBox="0 0 3 15"><rect x="0" y="0" width="1.700" height="1.700" fill="#a39a82"/><rect x="1" y="1" width="1.200" height="1.200" fill="#fff"/><rect x="0" y="4" width="1.700" height="1.700" fill="#a39a82"/><rect x="1" y="5" width="1.200" height="1.200" fill="#fff"/><rect x="0" y="8" width="1.700" height="1.700" fill="#a39a82"/><rect x="1" y="9" width="1.200" height="1.200" fill="#fff"/><rect x="0" y="12" width="1.700" height="1.700" fill="#a39a82"/><rect x="1" y="13" width="1.200" height="1.200" fill="#fff"/></svg>
<div class="c" style="left:1259.20px;top:738px;letter-spacing:-0.210px;">Standard / kli</div>
<svg style="left:1354.3px;top:741px" width="3" height="15" viewBox="0 0 3 15"><rect x="0" y="0" width="1.700" height="1.700" fill="#a39a82"/><rect x="1" y="1" width="1.200" height="1.200" fill="#fff"/><rect x="0" y="4" width="1.700" height="1.700" fill="#a39a82"/><rect x="1" y="5" width="1.200" height="1.200" fill="#fff"/><rect x="0" y="8" width="1.700" height="1.700" fill="#a39a82"/><rect x="1" y="9" width="1.200" height="1.200" fill="#fff"/><rect x="0" y="12" width="1.700" height="1.700" fill="#a39a82"/><rect x="1" y="13" width="1.200" height="1.200" fill="#fff"/></svg>
<svg style="left:1362px;top:740px" width="14" height="15" viewBox="0 0 14 15"><path d="M5.71 2.37 L5.97 0.68 L8.03 0.68 L8.29 2.37 L9.50 2.87 L10.88 1.86 L12.34 3.32 L11.33 4.70 L11.83 5.91 L13.52 6.17 L13.52 8.23 L11.83 8.49 L11.33 9.70 L12.34 11.08 L10.88 12.54 L9.50 11.53 L8.29 12.03 L8.03 13.72 L5.97 13.72 L5.71 12.03 L4.50 11.53 L3.12 12.54 L1.66 11.08 L2.67 9.70 L2.17 8.49 L0.48 8.23 L0.48 6.17 L2.17 5.91 L2.67 4.70 L1.66 3.32 L3.12 1.86 L4.50 2.87Z" fill="#3b6fe0" stroke="#3b6fe0" stroke-width="0.8" stroke-linejoin="round"/><circle cx="7" cy="7.200" r="2.300" fill="#f0f0f0"/></svg>
</div>
<div class="abs" style="left:0;top:0;width:1382px;height:1px;background:#a6a6a0"></div>
</body>
</html>
